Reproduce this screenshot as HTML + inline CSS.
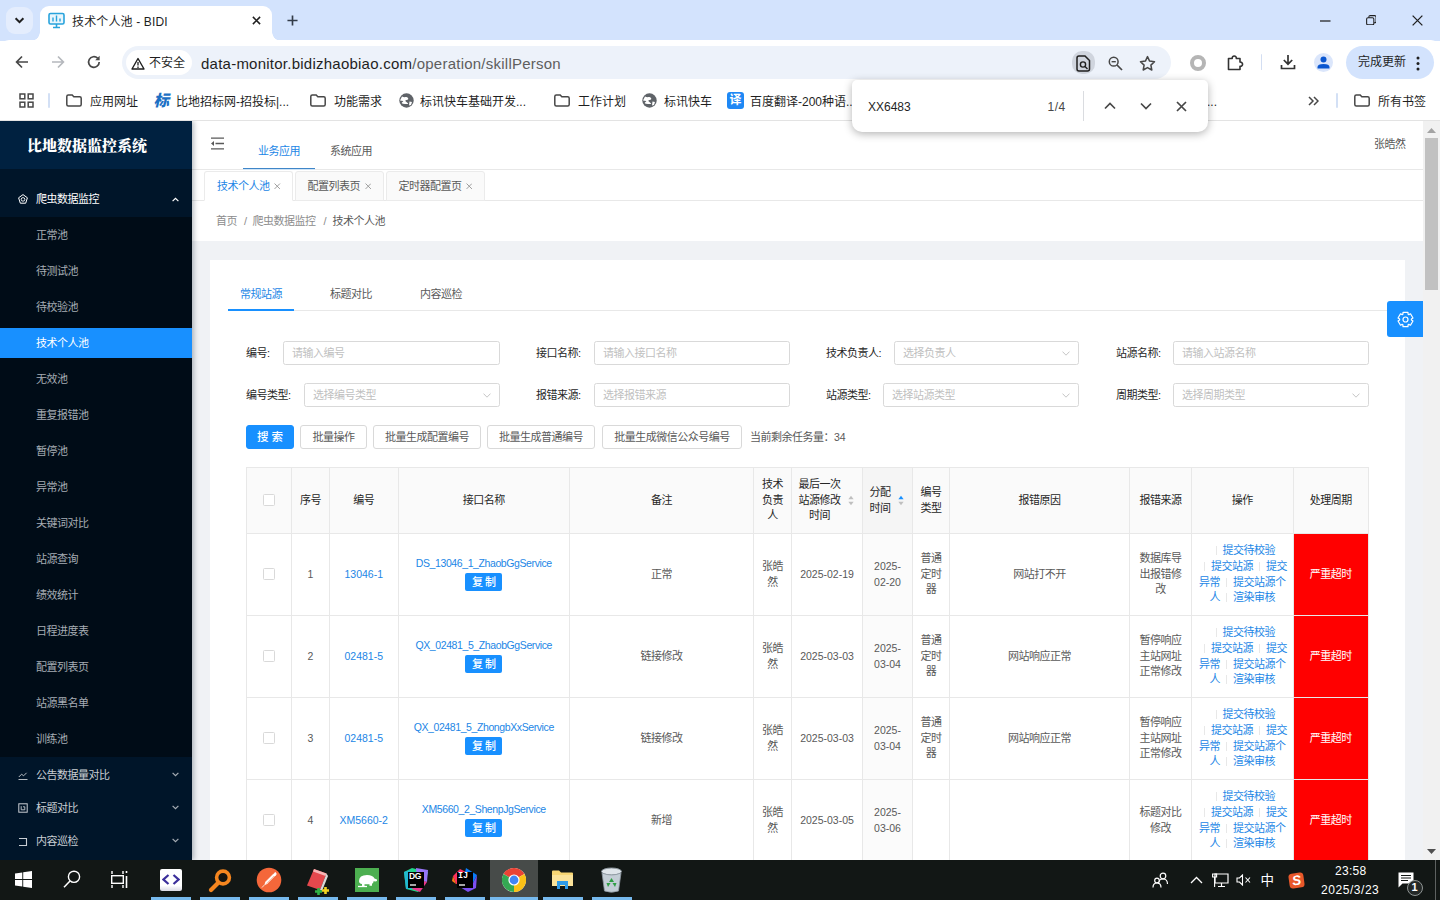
<!DOCTYPE html>
<html lang="zh-CN">
<head>
<meta charset="utf-8">
<title>技术个人池 - BIDI</title>
<style>
*{box-sizing:border-box;margin:0;padding:0}
html,body{width:1440px;height:900px;overflow:hidden;background:#fff}
body{font-family:"Liberation Sans","Noto Sans CJK SC",sans-serif;font-size:12px;color:#333;position:relative}
.abs{position:absolute}
svg{display:block}
/* ---------- browser chrome ---------- */
#tabstrip{position:absolute;left:0;top:0;width:1440px;height:41px;background:#d3e3fd}
#tabsearch{position:absolute;left:6px;top:7px;width:27px;height:27px;border-radius:9px;background:#e4edfd}
#tab{position:absolute;left:40px;top:6px;width:232px;height:35px;background:#fff;border-radius:9px 9px 0 0}
#tab:before,#tab:after{content:"";position:absolute;bottom:0;width:9px;height:9px;background:radial-gradient(circle at 0 0,rgba(255,255,255,0) 8.5px,#fff 9px)}
#tab:before{left:-9px}
#tab:after{right:-9px;background:radial-gradient(circle at 100% 0,rgba(255,255,255,0) 8.5px,#fff 9px)}
#tabtitle{position:absolute;left:32px;top:6.500px;letter-spacing:.15px;font-size:12px;color:#1f1f1f;white-space:nowrap;line-height:18px}
#toolbar{position:absolute;left:0;top:40px;width:1440px;height:43px;background:#fff;border-radius:9px 9px 0 0}
#omni{position:absolute;left:122px;top:6px;width:1049px;height:33px;border-radius:17px;background:#edf2fa}
#chip{position:absolute;left:4px;top:4px;width:66px;height:25px;border-radius:13px;background:#fff}
#chip span{position:absolute;left:23px;top:3.500px;font-size:12px;color:#1f1f1f;line-height:19px}
#url{position:absolute;left:79px;top:6.500px;font-size:15px;line-height:21px;color:#1f1f1f;white-space:nowrap;letter-spacing:.24px}
#url i{font-style:normal;color:#5e5e5e}
#update{position:absolute;left:1346px;top:6px;width:88px;height:33px;border-radius:17px;background:#d3e3fd}
#update span{position:absolute;left:12px;top:7px;font-size:12px;color:#1f1f1f;line-height:19px}
#bookmarks{position:absolute;left:0;top:83px;width:1440px;height:38px;background:#fff;border-bottom:1px solid #e3e3e3}
.bm{position:absolute;top:9.500px;font-size:12px;line-height:19px;color:#1f1f1f;white-space:nowrap}
/* ---------- find bar ---------- */
#find{position:absolute;left:852px;top:80px;width:356px;height:52px;background:#fff;border-radius:5px 5px 10px 10px;box-shadow:0 2px 9px rgba(0,0,0,.3)}
/* ---------- taskbar ---------- */
#taskbar{position:absolute;left:0;top:860px;width:1440px;height:40px;background:#121715}
/* ---------- page ---------- */
#page{position:absolute;left:0;top:121px;width:1440px;height:739px;background:#f0f2f5;overflow:hidden}
#side{position:absolute;left:0;top:0;width:192px;height:739px;background:#001529}
#logo{position:absolute;left:0;top:0;width:192px;height:48px;background:#002140;color:#fff;font-weight:bold;font-size:15px;line-height:50px;padding-left:27px;font-family:"Liberation Serif","Noto Serif CJK SC",serif;font-weight:900}

#menu0{position:absolute;left:0;top:63px;width:192px;height:30px;color:#fff;font-size:10.5px;line-height:30px}
.mi{position:absolute;left:0;width:192px;height:30px;line-height:30px;font-size:11px;letter-spacing:-.5px;color:#a6adb4;padding-left:36px;white-space:nowrap}
#sub{position:absolute;left:0;top:96px;width:192px;height:540px;background:#000c17}
.sel{background:#1890ff;color:#fff}
.chev{position:absolute;left:172px}

.ul{position:absolute;top:37px;height:3px;width:40px;background:#76b9ed}
.tray{position:absolute;color:#fff;font-size:12px;white-space:nowrap}

#side{box-shadow:2px 0 5px rgba(0,21,41,.28);z-index:5}
#main{position:absolute;left:192px;top:0;width:1231px;height:739px;font-size:11px;letter-spacing:-.5px;color:#595959}
.l{font-size:10.500px;letter-spacing:0}
#hdr{position:absolute;left:0;top:0;width:1231px;height:49px;background:#fff;border-bottom:1px solid #e8e8e8}
.nav{position:absolute;top:21px;font-size:11px;line-height:18px;color:#595959;white-space:nowrap}
#tabsbar{position:absolute;left:0;top:49px;width:1231px;height:31px;background:#fff;border-bottom:1px solid #e8e8e8}
.ptab{position:absolute;top:1px;height:30px;border:1px solid #ebebeb;border-radius:3px 3px 0 0;background:#fafafa;line-height:28px;font-size:11px;color:#595959;white-space:nowrap;padding-left:12px}
.ptab.on{background:#fff;border-bottom-color:#fff;color:#2286e6}
.ptab svg{position:absolute;top:11px}
#crumb{position:absolute;left:0;top:80px;width:1231px;height:40px;background:#fff;line-height:40px;white-space:nowrap}
#crumb span{position:absolute;top:0;color:#8c8c8c}
#card{position:absolute;left:18px;top:139px;width:1195px;height:620px;background:#fff}
.ctab{position:absolute;top:24.500px;font-size:11px;line-height:18px;color:#595959;white-space:nowrap}
.lbl{position:absolute;color:#262626;white-space:nowrap;line-height:24px;height:24px}
.inp{position:absolute;height:24px;border:1px solid #d9d9d9;border-radius:2.500px;background:#fff;color:#bfbfbf;line-height:22px;padding-left:8px;white-space:nowrap}
.inp svg{position:absolute;right:8px;top:9px}
.btn{position:absolute;top:165px;height:24px;border:1px solid #d9d9d9;border-radius:3px;background:#fff;color:#595959;line-height:22px;text-align:center;white-space:nowrap}

#tbl{position:absolute;left:36px;top:207px;width:1123px}
#tbl table{border-collapse:collapse;table-layout:fixed;width:1123px;font-size:11px;line-height:15.750px;color:#595959}
#tbl td,#tbl th{border:1px solid #e8e8e8;padding:0 6px;white-space:nowrap;text-align:center;vertical-align:middle;font-weight:normal;overflow:hidden}
#tbl th{height:66px;background:#fafafa;color:#262626}
#tbl td{height:82px}
#tbl a{color:#2286e6;text-decoration:none}
#tbl a.n{letter-spacing:-.4px;font-size:10.500px}
#tbl .cb{display:inline-block;width:12px;height:12px;border:1px solid #d9d9d9;border-radius:1.500px;background:#fff;vertical-align:middle;position:relative;top:-1px}
#tbl .cp{display:inline-block;width:37px;height:18px;line-height:18px;border-radius:2px;background:#1890ff;color:#fff;margin-top:2px;font-weight:500;position:relative;top:-1px}
#tbl a.n{position:relative;top:-1px}
#tbl .red{background:#ff0000;color:#fff}
#tbl .dv{display:inline-block;width:1px;height:9px;background:#e8e8e8;margin:0 6px;vertical-align:-1px}
#tbl .st{display:inline-block;vertical-align:middle;text-align:center;position:relative;left:-2px}
#tbl .so{display:inline-block;vertical-align:middle;margin-left:5px}
#sbar{position:absolute;left:1423px;top:0;width:17px;height:739px;background:#f1f1f1}
#sbar i{position:absolute;left:2px;top:17px;width:13px;height:152px;background:#c1c1c1}
</style>
</head>
<body>
<div id="tabstrip">
  <div id="tabsearch"><svg class="abs" style="left:8px;top:9px" width="11" height="9" viewBox="0 0 11 9"><path d="M1.6 2.2 5.5 6.1 9.4 2.2" fill="none" stroke="#1f1f1f" stroke-width="2"/></svg></div>
  <div id="tab">
    <svg class="abs" style="left:8px;top:6px" width="17" height="17" viewBox="0 0 17 17"><rect x="1" y="1.5" width="15" height="10.5" rx="1.5" fill="#e8f6fd" stroke="#29a3dc" stroke-width="1.6"/><path d="M5 9.500V5.500M8.500 9.500V3.500M12 9.500V6.500" stroke="#29a3dc" stroke-width="1.400"/><path d="M8.5 12v3M5 15.5h7" stroke="#29a3dc" stroke-width="1.6"/></svg>
    <div id="tabtitle">技术个人池 - BIDI</div>
    <svg class="abs" style="left:211.500px;top:9.500px" width="9" height="9" viewBox="0 0 10 10"><path d="M1 1 9 9M9 1 1 9" stroke="#1f1f1f" stroke-width="1.700"/></svg>
  </div>
  <svg class="abs" style="left:286.500px;top:14.500px" width="11" height="11" viewBox="0 0 12 12"><path d="M6 .5v11M.5 6h11" stroke="#333c49" stroke-width="1.800"/></svg>
  <svg class="abs" style="left:1320px;top:19.500px" width="10.500" height="2" viewBox="0 0 11 2"><path d="M0 1h11" stroke="#1f1f1f" stroke-width="1.3"/></svg>
  <svg class="abs" style="left:1365.500px;top:14.500px" width="10.800" height="10.800" viewBox="0 0 12 12"><rect x=".7" y="3" width="8" height="8" rx="1.5" fill="none" stroke="#1f1f1f" stroke-width="1.2"/><path d="M3.2 3V2.2q0-1.5 1.5-1.5h5q1.5 0 1.5 1.5v5q0 1.5-1.5 1.5H8.9" fill="none" stroke="#1f1f1f" stroke-width="1.2"/></svg>
  <svg class="abs" style="left:1411.500px;top:14.500px" width="11" height="11" viewBox="0 0 12 12"><path d="M.7.7l10.6 10.6M11.3.7.7 11.3" stroke="#1f1f1f" stroke-width="1.400"/></svg>
</div>
<div id="toolbar">
  <svg class="abs" style="left:15px;top:15px" width="14" height="14" viewBox="0 0 14 14"><path d="M13 7H2M7 1.5 1.6 7 7 12.5" fill="none" stroke="#474747" stroke-width="1.7"/></svg>
  <svg class="abs" style="left:51px;top:15px" width="14" height="14" viewBox="0 0 14 14"><path d="M1 7h11M7 1.5 12.4 7 7 12.5" fill="none" stroke="#b5b8bd" stroke-width="1.7"/></svg>
  <svg class="abs" style="left:87px;top:15px" width="14" height="14" viewBox="0 0 14 14"><path d="M12.2 7A5.3 5.3 0 1 1 10.6 3.2" fill="none" stroke="#474747" stroke-width="1.7"/><path d="M12.6.8v4.4H8.2z" fill="#474747"/></svg>
  <div id="omni">
    <div id="chip"><svg class="abs" style="left:5px;top:6.500px" width="14" height="13" viewBox="0 0 14 13"><path d="M7 1.5 13 12H1z" fill="none" stroke="#1f1f1f" stroke-width="1.4" stroke-linejoin="round"/><path d="M7 5v3.5M7 9.6v1.3" stroke="#1f1f1f" stroke-width="1.3"/></svg><span>不安全</span></div>
    <div id="url">data-monitor.bidizhaobiao.com<i>/operation/skillPerson</i></div>
    <div class="abs" style="left:950px;top:5px;width:23px;height:23px;border-radius:10px;background:#d0d5de"></div>
    <svg class="abs" style="left:954px;top:9px" width="15" height="17" viewBox="0 0 15 17"><path d="M3 1h6l4.5 4.5V14q0 2-2 2H3q-2 0-2-2V3q0-2 2-2z" fill="none" stroke="#1f1f1f" stroke-width="1.5"/><circle cx="7" cy="9.5" r="2.6" fill="none" stroke="#1f1f1f" stroke-width="1.4"/><path d="M9 11.5l2.5 2.5" stroke="#1f1f1f" stroke-width="1.4"/></svg>
    <svg class="abs" style="left:986px;top:10px" width="15" height="15" viewBox="0 0 15 15"><circle cx="5.7" cy="5.7" r="4.4" fill="none" stroke="#474747" stroke-width="1.5"/><path d="M9 9l5 5" stroke="#474747" stroke-width="1.7"/><path d="M3.6 5.7h4.2" stroke="#474747" stroke-width="1.4"/></svg>
    <svg class="abs" style="left:1017px;top:9px" width="17" height="16" viewBox="0 0 17 16"><path d="M8.5 1.6l2.1 4.5 4.9.6-3.6 3.4.9 4.9-4.3-2.4-4.3 2.4.9-4.9L1.500 6.700l4.900-.6z" fill="none" stroke="#474747" stroke-width="1.5" stroke-linejoin="round"/></svg>
  </div>
  <div class="abs" style="left:1189.500px;top:14.500px;width:16px;height:16px;border-radius:50%;border:4px solid #b5b5b5"></div>
  <svg class="abs" style="left:1226px;top:13px" width="18" height="18" viewBox="0 0 18 18"><path d="M2.500 5.500h3.700a2.100 2.100 0 1 1 4.100 0H14v3.600a2.100 2.100 0 1 1 0 4.100V16.500H2.500z" fill="none" stroke="#333" stroke-width="1.6" stroke-linejoin="round"/></svg>
  <div class="abs" style="left:1260.500px;top:14px;width:1.500px;height:16px;background:#d3def2;border-radius:1px"></div>
  <svg class="abs" style="left:1280px;top:14px" width="16" height="16" viewBox="0 0 16 16"><path d="M8 1v9M3.800 6 8 10.200 12.200 6" fill="none" stroke="#333" stroke-width="1.7"/><path d="M1.500 11v3.500h13V11" fill="none" stroke="#333" stroke-width="1.7"/></svg>
  <div class="abs" style="left:1314px;top:13px;width:19px;height:19px;border-radius:50%;background:#dbe6fb"></div>
  <svg class="abs" style="left:1317px;top:16px" width="13" height="13" viewBox="0 0 13 13"><circle cx="6.500" cy="3.500" r="3" fill="#0b57d0"/><path d="M.5 12.500v-1.500q0-3 6-3t6 3v1.500z" fill="#0b57d0"/></svg>
  <div id="update"><span>完成更新</span><svg class="abs" style="left:70px;top:10px" width="4" height="15" viewBox="0 0 4 15"><circle cx="2" cy="2" r="1.500" fill="#1f1f1f"/><circle cx="2" cy="7.500" r="1.500" fill="#1f1f1f"/><circle cx="2" cy="13" r="1.500" fill="#1f1f1f"/></svg></div>
</div>
<div id="bookmarks">
  <svg class="abs" style="left:19px;top:10px" width="15" height="15" viewBox="0 0 15 15"><g fill="none" stroke="#474747" stroke-width="1.500"><rect x="1" y="1" width="4.800" height="4.800"/><rect x="9.200" y="1" width="4.800" height="4.800"/><rect x="1" y="9.200" width="4.800" height="4.800"/><rect x="9.200" y="9.200" width="4.800" height="4.800"/></g></svg>
  <div class="abs" style="left:48px;top:10px;width:2px;height:15px;background:#d3e0f5;border-radius:1px"></div>
  <svg class="abs" style="left:66px;top:11px" width="16" height="13" viewBox="0 0 16 13"><path d="M2.300 1h3.900l1.600 1.700h5.900q1.500 0 1.500 1.500v6.300q0 1.500-1.500 1.500H2.300Q.8 12 .8 10.500v-8Q.8 1 2.300 1z" fill="none" stroke="#474747" stroke-width="1.500"/></svg><div class="bm" style="left:90px">应用网址</div>
  <div class="abs" style="left:153.500px;top:7.500px;width:18px;font-size:15.500px;line-height:20px;font-weight:900;font-style:italic;color:#1c70c4;font-family:'Liberation Sans','Noto Sans CJK SC',sans-serif">标</div>
  <div class="bm" style="left:176px">比地招标网-招投标|...</div>
  <svg class="abs" style="left:310px;top:11px" width="16" height="13" viewBox="0 0 16 13"><path d="M2.300 1h3.900l1.600 1.700h5.900q1.500 0 1.500 1.500v6.300q0 1.500-1.500 1.500H2.300Q.8 12 .8 10.500v-8Q.8 1 2.300 1z" fill="none" stroke="#474747" stroke-width="1.500"/></svg><div class="bm" style="left:334px">功能需求</div>
  <svg class="abs" style="left:399px;top:10px" width="15" height="15" viewBox="0 0 15 15"><circle cx="7.500" cy="7.500" r="7.200" fill="#5f6368"/><path d="M3 3.500q2 1 3.500.5t2.500 1-1.500 2 .5 2.500-2 1.500T3.500 9 1 7.500zM10.500 8.500l2.500.5-1 3-2 .5z" fill="#fff"/></svg><div class="bm" style="left:420px">标讯快车基础开发...</div>
  <svg class="abs" style="left:554px;top:11px" width="16" height="13" viewBox="0 0 16 13"><path d="M2.300 1h3.900l1.600 1.700h5.900q1.500 0 1.500 1.500v6.300q0 1.500-1.500 1.500H2.300Q.8 12 .8 10.500v-8Q.8 1 2.300 1z" fill="none" stroke="#474747" stroke-width="1.500"/></svg><div class="bm" style="left:578px">工作计划</div>
  <svg class="abs" style="left:642px;top:10px" width="15" height="15" viewBox="0 0 15 15"><circle cx="7.500" cy="7.500" r="7.200" fill="#5f6368"/><path d="M3 3.500q2 1 3.500.5t2.500 1-1.500 2 .5 2.500-2 1.500T3.500 9 1 7.500zM10.500 8.500l2.500.5-1 3-2 .5z" fill="#fff"/></svg><div class="bm" style="left:664px">标讯快车</div>
  <div class="abs" style="left:727px;top:9px;width:17px;height:17px;border-radius:3px;background:#1e88f5;color:#fff;font-size:12px;line-height:17px;text-align:center;font-weight:bold">译</div>
  <div class="bm" style="left:750px">百度翻译-200种语...</div>
  <div class="bm" style="left:1207px">...</div>
  <svg class="abs" style="left:1308px;top:13px" width="11" height="10" viewBox="0 0 11 10"><path d="M1 1l4 4-4 4M6 1l4 4-4 4" fill="none" stroke="#474747" stroke-width="1.500"/></svg>
  <div class="abs" style="left:1336px;top:10px;width:2px;height:15px;background:#d3e0f5;border-radius:1px"></div>
  <svg class="abs" style="left:1354px;top:11px" width="16" height="13" viewBox="0 0 16 13"><path d="M2.300 1h3.900l1.600 1.700h5.900q1.500 0 1.500 1.500v6.300q0 1.500-1.500 1.500H2.300Q.8 12 .8 10.500v-8Q.8 1 2.300 1z" fill="none" stroke="#474747" stroke-width="1.500"/></svg><div class="bm" style="left:1378px">所有书签</div>
</div>
<div id="page">
  <div id="side">
    <div id="logo">比地数据监控系统</div>
    <div id="sub"></div>
    <div class="mi" style="top:63px;color:#fff">爬虫数据监控</div>
    <svg class="abs" style="left:18px;top:73px" width="10" height="10" viewBox="0 0 10 10"><path d="M5 .6 9.400 3.800 7.700 9.200H2.300L.6 3.800z" fill="none" stroke="#fff" stroke-width="1"/><circle cx="5" cy="5.400" r="1.800" fill="none" stroke="#fff" stroke-width=".9"/></svg>
    <svg class="chev" style="top:76px" width="7" height="5" viewBox="0 0 7 5"><path d="M.6 4.200 3.500 1.300 6.400 4.200" fill="none" stroke="#fff" stroke-width="1.200"/></svg>
<div class="mi" style="top:99px">正常池</div>
<div class="mi" style="top:135px">待测试池</div>
<div class="mi" style="top:171px">待校验池</div>
<div class="mi sel" style="top:207px">技术个人池</div>
<div class="mi" style="top:243px">无效池</div>
<div class="mi" style="top:279px">重复报错池</div>
<div class="mi" style="top:315px">暂停池</div>
<div class="mi" style="top:351px">异常池</div>
<div class="mi" style="top:387px">关键词对比</div>
<div class="mi" style="top:423px">站源查询</div>
<div class="mi" style="top:459px">绩效统计</div>
<div class="mi" style="top:495px">日程进度表</div>
<div class="mi" style="top:531px">配置列表页</div>
<div class="mi" style="top:567px">站源黑名单</div>
<div class="mi" style="top:603px">训练池</div>

    <div class="mi" style="top:639px;color:#c9ced3">公告数据量对比</div>
    <svg class="abs" style="left:18px;top:649.500px" width="10" height="10" viewBox="0 0 10 10"><path d="M.8 6 3.600 3.200 5.600 4.800 8.600 1.800" fill="none" stroke="#c9ced3" stroke-width=".9"/><path d="M.5 8.500h9" stroke="#c9ced3" stroke-width=".9"/></svg>
    <svg class="chev" style="top:651px" width="7" height="5" viewBox="0 0 7 5"><path d="M.6.8 3.500 3.700 6.400.8" fill="none" stroke="#a6adb4" stroke-width="1.200"/></svg>
    <div class="mi" style="top:672px;color:#c9ced3">标题对比</div>
    <svg class="abs" style="left:18px;top:682px" width="10" height="10" viewBox="0 0 10 10"><rect x=".8" y=".8" width="8.400" height="8.400" fill="none" stroke="#c9ced3" stroke-width="1"/><path d="M3.200 3.200v3.600h3.600V3.800H5" fill="none" stroke="#c9ced3" stroke-width=".9"/></svg>
    <svg class="chev" style="top:684px" width="7" height="5" viewBox="0 0 7 5"><path d="M.6.8 3.500 3.700 6.400.8" fill="none" stroke="#a6adb4" stroke-width="1.200"/></svg>
    <div class="mi" style="top:705px;color:#c9ced3">内容巡检</div>
    <svg class="abs" style="left:18px;top:715.500px" width="10" height="10" viewBox="0 0 10 10"><path d="M1 1.500h7.500v7H1" fill="none" stroke="#c9ced3" stroke-width="1.100"/></svg>
    <svg class="chev" style="top:717px" width="7" height="5" viewBox="0 0 7 5"><path d="M.6.8 3.500 3.700 6.400.8" fill="none" stroke="#a6adb4" stroke-width="1.200"/></svg>
  </div>
  <div id="main">
    <div id="hdr">
      <svg class="abs" style="left:19px;top:16px" width="13" height="13" viewBox="0 0 13 13"><path d="M0 1.200h13M4.500 6.500H13M0 11.800h13" stroke="#595959" stroke-width="1.300"/><path d="M3 4v5L0 6.500z" fill="#595959"/></svg>
      <div class="nav" style="left:66px;color:#2286e6">业务应用</div>
      <div class="nav" style="left:138px">系统应用</div>
      <div class="abs" style="left:51px;top:47px;width:72px;height:1px;background:#3f86c8"></div><div class="abs" style="left:51px;top:48px;width:72px;height:1px;background:#cfe4f7;z-index:2"></div>
      <div class="nav" style="left:1182px;top:14px">张皓然</div>
    </div>
    <div id="tabsbar">
      <div class="ptab on" style="left:12px;width:89px">技术个人池<svg style="left:69px" width="6.500" height="6.500" viewBox="0 0 7 7"><path d="M.6.6l5.800 5.800M6.400.6.600 6.400" stroke="#8c8c8c" stroke-width=".9"/></svg></div>
      <div class="ptab" style="left:102.500px;width:89px">配置列表页<svg style="left:69px" width="6.500" height="6.500" viewBox="0 0 7 7"><path d="M.6.6l5.800 5.800M6.400.6.600 6.400" stroke="#8c8c8c" stroke-width=".9"/></svg></div>
      <div class="ptab" style="left:193.500px;width:99px">定时器配置页<svg style="left:79px" width="6.500" height="6.500" viewBox="0 0 7 7"><path d="M.6.6l5.800 5.800M6.400.6.600 6.400" stroke="#8c8c8c" stroke-width=".9"/></svg></div>
    </div>
    <div id="crumb"><span style="left:24px">首页</span><span style="left:52px">/</span><span style="left:60.500px">爬虫数据监控</span><span style="left:131.500px">/</span><span style="left:140.500px;color:#595959">技术个人池</span></div>
    <div id="card">
      <div class="ctab" style="left:30px;color:#2286e6">常规站源</div>
      <div class="ctab" style="left:120px">标题对比</div>
      <div class="ctab" style="left:210px">内容巡检</div>
      <div class="abs" style="left:18px;top:50px;width:1159px;height:1px;background:#e8e8e8"></div>
      <div class="abs" style="left:18px;top:49px;width:66px;height:2px;background:#1890ff"></div>

      <div class="lbl" style="left:36px;top:81px">编号:</div>
      <div class="inp" style="left:73px;top:81px;width:217px">请输入编号</div>
      <div class="lbl" style="left:326px;top:81px">接口名称:</div>
      <div class="inp" style="left:384px;top:81px;width:196px">请输入接口名称</div>
      <div class="lbl" style="left:616px;top:81px">技术负责人:</div>
      <div class="inp" style="left:684px;top:81px;width:185px">选择负责人<svg width="8" height="5" viewBox="0 0 8 5"><path d="M.5.600 4 4.200 7.500.600" fill="none" stroke="#bfbfbf" stroke-width=".9"/></svg></div>
      <div class="lbl" style="left:906px;top:81px">站源名称:</div>
      <div class="inp" style="left:963px;top:81px;width:196px">请输入站源名称</div>

      <div class="lbl" style="left:36px;top:123px">编号类型:</div>
      <div class="inp" style="left:94px;top:123px;width:196px">选择编号类型<svg width="8" height="5" viewBox="0 0 8 5"><path d="M.5.600 4 4.200 7.500.600" fill="none" stroke="#bfbfbf" stroke-width=".9"/></svg></div>
      <div class="lbl" style="left:326px;top:123px">报错来源:</div>
      <div class="inp" style="left:384px;top:123px;width:196px">选择报错来源</div>
      <div class="lbl" style="left:616px;top:123px">站源类型:</div>
      <div class="inp" style="left:673px;top:123px;width:196px">选择站源类型<svg width="8" height="5" viewBox="0 0 8 5"><path d="M.5.600 4 4.200 7.500.600" fill="none" stroke="#bfbfbf" stroke-width=".9"/></svg></div>
      <div class="lbl" style="left:906px;top:123px">周期类型:</div>
      <div class="inp" style="left:963px;top:123px;width:196px">选择周期类型<svg width="8" height="5" viewBox="0 0 8 5"><path d="M.5.600 4 4.200 7.500.600" fill="none" stroke="#bfbfbf" stroke-width=".9"/></svg></div>

      <div class="btn" style="left:36px;width:48px;background:#1890ff;border-color:#1890ff;color:#fff;font-weight:500;font-size:11.500px;letter-spacing:0">搜 索</div>
      <div class="btn" style="left:90px;width:67px">批量操作</div>
      <div class="btn" style="left:163px;width:108px">批量生成配置编号</div>
      <div class="btn" style="left:277px;width:108px">批量生成普通编号</div>
      <div class="btn" style="left:392px;width:140px">批量生成微信公众号编号</div>
      <div class="lbl" style="left:540px;top:165px;color:#595959">当前剩余任务量：<span class="l">34</span></div>
      <div id="tbl"><table><colgroup><col style="width:45px"><col style="width:38px"><col style="width:68.5px"><col style="width:171.5px"><col style="width:184px"><col style="width:38px"><col style="width:71px"><col style="width:50px"><col style="width:37px"><col style="width:180px"><col style="width:62px"><col style="width:101.5px"><col style="width:75.5px"></colgroup><tr><th><span class="cb"></span></th><th>序号</th><th>编号</th><th>接口名称</th><th>备注</th><th>技术<br>负责<br>人</th><th><span class="st">最后一次<br>站源修改<br>时间</span><svg class="so" width="6" height="11" viewBox="0 0 6 11"><path d="M3 .8 5.600 4.300H.4z" fill="#bfbfbf"/><path d="M3 10.200.4 6.700h5.200z" fill="#bfbfbf"/></svg></th><th style="background:#f5f5f5"><span class="st">分配<br>时间</span><svg class="so" width="6" height="11" viewBox="0 0 6 11"><path d="M3 .8 5.600 4.300H.4z" fill="#1890ff"/><path d="M3 10.200.4 6.700h5.200z" fill="#bfbfbf"/></svg></th><th>编号<br>类型</th><th>报错原因</th><th>报错来源</th><th>操作</th><th>处理周期</th></tr><tr><td><span class="cb"></span></td><td class="l">1</td><td class="l"><a>13046-1</a></td><td><a class="n">DS_13046_1_ZhaobGgService</a><br><span class="cp">复 制</span></td><td>正常</td><td>张皓<br>然</td><td class="l">2025-02-19</td><td class="l" style="background:#fbfbfb">2025-<br>02-20</td><td>普通<br>定时<br>器</td><td>网站打不开</td><td>数据库导<br>出报错修<br>改</td><td><span class="dv"></span><a>提交待校验</a><br><span class="dv"></span><a>提交站源</a><span class="dv"></span><a>提交</a><br><a>异常</a><span class="dv"></span><a>提交站源个</a><br><a>人</a><span class="dv"></span><a>渲染审核</a></td><td class="red">严重超时</td></tr><tr><td><span class="cb"></span></td><td class="l">2</td><td class="l"><a>02481-5</a></td><td><a class="n">QX_02481_5_ZhaobGgService</a><br><span class="cp">复 制</span></td><td>链接修改</td><td>张皓<br>然</td><td class="l">2025-03-03</td><td class="l" style="background:#fbfbfb">2025-<br>03-04</td><td>普通<br>定时<br>器</td><td>网站响应正常</td><td>暂停响应<br>主站网址<br>正常修改</td><td><span class="dv"></span><a>提交待校验</a><br><span class="dv"></span><a>提交站源</a><span class="dv"></span><a>提交</a><br><a>异常</a><span class="dv"></span><a>提交站源个</a><br><a>人</a><span class="dv"></span><a>渲染审核</a></td><td class="red">严重超时</td></tr><tr><td><span class="cb"></span></td><td class="l">3</td><td class="l"><a>02481-5</a></td><td><a class="n">QX_02481_5_ZhongbXxService</a><br><span class="cp">复 制</span></td><td>链接修改</td><td>张皓<br>然</td><td class="l">2025-03-03</td><td class="l" style="background:#fbfbfb">2025-<br>03-04</td><td>普通<br>定时<br>器</td><td>网站响应正常</td><td>暂停响应<br>主站网址<br>正常修改</td><td><span class="dv"></span><a>提交待校验</a><br><span class="dv"></span><a>提交站源</a><span class="dv"></span><a>提交</a><br><a>异常</a><span class="dv"></span><a>提交站源个</a><br><a>人</a><span class="dv"></span><a>渲染审核</a></td><td class="red">严重超时</td></tr><tr><td><span class="cb"></span></td><td class="l">4</td><td class="l"><a>XM5660-2</a></td><td><a class="n">XM5660_2_ShenpJgService</a><br><span class="cp">复 制</span></td><td>新增</td><td>张皓<br>然</td><td class="l">2025-03-05</td><td class="l" style="background:#fbfbfb">2025-<br>03-06</td><td></td><td></td><td>标题对比<br>修改</td><td><span class="dv"></span><a>提交待校验</a><br><span class="dv"></span><a>提交站源</a><span class="dv"></span><a>提交</a><br><a>异常</a><span class="dv"></span><a>提交站源个</a><br><a>人</a><span class="dv"></span><a>渲染审核</a></td><td class="red">严重超时</td></tr></table></div>
    </div>
    <div class="abs" style="left:1195px;top:180px;width:36px;height:36px;background:#1890ff;border-radius:3px 0 0 3px"></div>
    <svg class="abs" style="left:1204.500px;top:189.500px" width="17" height="17" viewBox="0 0 17 17"><path d="M6.03 1.31 L10.97 1.31 L11.09 3.20 L11.80 3.61 L13.49 2.76 L15.96 7.05 L14.39 8.09 L14.39 8.91 L15.96 9.95 L13.49 14.24 L11.80 13.39 L11.09 13.80 L10.97 15.69 L6.03 15.69 L5.91 13.80 L5.20 13.39 L3.51 14.24 L1.04 9.95 L2.61 8.91 L2.61 8.09 L1.04 7.05 L3.51 2.76 L5.20 3.61 L5.91 3.20z" fill="none" stroke="#fff" stroke-width="1.200" stroke-linejoin="round"/><circle cx="8.500" cy="8.500" r="2.500" fill="none" stroke="#fff" stroke-width="1.200"/></svg>
  </div>
  <div id="sbar"><i></i><svg class="abs" style="left:4px;top:7px" width="9" height="5" viewBox="0 0 9 5"><path d="M4.500 0 9 5H0z" fill="#a3a3a3"/></svg><svg class="abs" style="left:4px;top:728px" width="9" height="5" viewBox="0 0 9 5"><path d="M4.500 5 9 0H0z" fill="#505050"/></svg></div>
</div>
<div id="find">
  <div class="abs" style="left:16px;top:18.500px;font-size:12px;line-height:16px;color:#1f1f1f">XX6483</div>
  <div class="abs" style="left:195.500px;top:18.500px;font-size:12px;line-height:16px;color:#474747;letter-spacing:.5px">1/4</div>
  <div class="abs" style="left:231px;top:11px;width:1px;height:30px;background:#dadce0"></div>
  <svg class="abs" style="left:252px;top:22px" width="12" height="8" viewBox="0 0 12 8"><path d="M1 6.500 6 1.500 11 6.500" fill="none" stroke="#474747" stroke-width="1.700"/></svg>
  <svg class="abs" style="left:288px;top:22px" width="12" height="8" viewBox="0 0 12 8"><path d="M1 1.500 6 6.500 11 1.500" fill="none" stroke="#474747" stroke-width="1.700"/></svg>
  <svg class="abs" style="left:324px;top:21px" width="11" height="11" viewBox="0 0 11 11"><path d="M1 1l9 9M10 1 1 10" stroke="#474747" stroke-width="1.700"/></svg>
</div>
<div id="taskbar">
  <div class="abs" style="left:490px;top:0;width:48px;height:40px;background:#474b49"></div>
  <div class="ul" style="left:151px"></div><div class="ul" style="left:200px"></div><div class="ul" style="left:249px"></div><div class="ul" style="left:298px"></div><div class="ul" style="left:347px"></div><div class="ul" style="left:396px"></div><div class="ul" style="left:445px"></div><div class="ul" style="left:543px"></div><div class="ul" style="left:592px"></div><div class="ul" style="left:490px;width:48px"></div>
  <svg class="abs" style="left:15px;top:11px" width="17" height="17" viewBox="0 0 17 17"><path d="M0 2.400 7.300 1.400V8H0zM8.200 1.300 17 0V8H8.200zM0 8.900H7.300V15.500L0 14.500zM8.200 8.900H17V17L8.200 15.700z" fill="#fff"/></svg>
  <svg class="abs" style="left:63px;top:10px" width="18" height="18" viewBox="0 0 18 18"><circle cx="11" cy="6.800" r="5.600" fill="none" stroke="#fff" stroke-width="1.400"/><path d="M7 11 1 17.300" stroke="#fff" stroke-width="1.500"/></svg>
  <svg class="abs" style="left:111px;top:11px" width="18" height="17" viewBox="0 0 18 17"><path d="M1 0v3M12 0v3M1 14v3M12 14v3" stroke="#fff" stroke-width="1.400"/><rect x=".7" y="4.700" width="11.600" height="7.600" fill="none" stroke="#fff" stroke-width="1.400"/><path d="M15.500 0v2M15.500 5v12" stroke="#fff" stroke-width="1.600"/></svg>
  <!-- app icons -->
  <div class="abs" style="left:160px;top:9px;width:22px;height:22px;border-radius:2px;background:linear-gradient(#fff,#fff 75%,#d9d9e4)"></div>
  <svg class="abs" style="left:162px;top:14px" width="18" height="11" viewBox="0 0 18 11"><path d="M6.500 1 1.500 5.500 6.500 10M11.500 1 16.500 5.500 11.500 10" fill="none" stroke="#3b2f9b" stroke-width="2.200"/></svg>
  <svg class="abs" style="left:207px;top:7px" width="26" height="28" viewBox="0 0 26 28"><circle cx="16" cy="10.500" r="6.400" fill="#15140f" stroke="#f5861f" stroke-width="3.600"/><path d="M10.500 16.500 4 23" stroke="#f5861f" stroke-width="4.200" stroke-linecap="round"/></svg>
  <svg class="abs" style="left:256px;top:7px" width="26" height="26" viewBox="0 0 26 26"><circle cx="13" cy="13" r="12.300" fill="#f4673a"/><path d="M19.500 5.500q1.500 1.500 0 3l-8 8-2.500.8.800-2.500 8-8q1-1 1.700-1.300zM9 17.300 6 20.500" fill="#fff" stroke="#fff" stroke-width=".8"/><path d="M11 16.500 18.500 9" stroke="#f4673a" stroke-width=".8"/></svg>
  <svg class="abs" style="left:305px;top:6px" width="26" height="30" viewBox="0 0 26 30"><path d="M9 3 21.500 7.500 15 24 2 19.500z" fill="#e5484d"/><path d="M9 3 21.500 7.500 20.500 10 8 5.500z" fill="#f7b5b5"/><path d="M21.500 7.500 23 10 17 25 15 24z" fill="#d9d9d9"/><path d="M13.500 22v7M10 25.500h7" stroke="#2fb344" stroke-width="2.600"/><path d="M20.500 21v7M17 24.500h7" stroke="#f3d321" stroke-width="2.600"/></svg>
  <div class="abs" style="left:355px;top:8px;width:24px;height:24px;background:#4caf50"></div>
  <svg class="abs" style="left:357px;top:13px" width="21" height="16" viewBox="0 0 21 16"><path d="M2 8q0-6 8-6 6 0 7.500 3.500l2.500 1q.5 1.500-1 2l-2.500-.3q0 2-1.500 2.500v2h-2.500v-1.500h-5V13H5v-2q-3-.5-3-3z" fill="#fff"/><path d="M1 13.500h9" stroke="#fff" stroke-width="1.300"/></svg>
  <svg class="abs" style="left:403px;top:7px" width="26" height="26" viewBox="0 0 26 26"><path d="M1 5 9 1 25 5 22 17 15 25 3 22z" fill="#21d789"/><path d="M13 1 25 3 24 15 14 12z" fill="#9775f8"/><path d="M14 12 24 15 17 25 9 22z" fill="#ed358c"/><path d="M1 5 7 3 9 22 3 22z" fill="#22b8cf"/><rect x="5" y="5" width="16" height="16" fill="#000"/><path d="M7 18h6" stroke="#fff" stroke-width="1.300"/></svg>
  <div class="abs" style="left:409px;top:12px;font:bold 8.500px/9px 'Liberation Sans',sans-serif;color:#fff;letter-spacing:-.3px">DG</div>
  <svg class="abs" style="left:452px;top:7px" width="26" height="26" viewBox="0 0 26 26"><path d="M1 9 8 2 16 6 10 16 4 17z" fill="#fe315d"/><path d="M4 17 1 9 0 14z" fill="#f97a12"/><path d="M14 1 25 8 21 16 12 10z" fill="#087cfa"/><path d="M21 16 25 8 24 21 16 25 8 20z" fill="#7b4ff0"/><rect x="5" y="5" width="16" height="16" fill="#000"/><path d="M7 18h6" stroke="#fff" stroke-width="1.300"/></svg>
  <div class="abs" style="left:458px;top:12px;font:bold 8.500px/9px 'Liberation Mono',monospace;color:#fff;letter-spacing:0">IJ</div>
  <svg class="abs" style="left:502px;top:8px" width="24" height="24" viewBox="0 0 24 24"><circle cx="12" cy="12" r="12" fill="#fff"/><path d="M12 12 1.600 6A12 12 0 0 1 22.400 6z" fill="#ea4335"/><path d="M12 12 22.400 6A12 12 0 0 1 12 24z" fill="#fbc116"/><path d="M12 12 12 24A12 12 0 0 1 1.600 6z" fill="#34a853"/><path d="M12 6.500H22.600" stroke="#ea4335" stroke-width="0"/><circle cx="12" cy="12" r="5.600" fill="#fff"/><circle cx="12" cy="12" r="4.400" fill="#4285f4"/></svg>
  <svg class="abs" style="left:551px;top:9px" width="24" height="22" viewBox="0 0 24 22"><path d="M1 2.500q0-1 1-1h6l2 2h11q1 0 1 1V17H1z" fill="#f7d674"/><path d="M1 6h21v11H1z" fill="#fbe39a"/><path d="M6 12h11v8h-3v-4h-5v4H6z" fill="#2f9be8"/></svg>
  <svg class="abs" style="left:600px;top:7px" width="23" height="26" viewBox="0 0 23 26"><ellipse cx="11.500" cy="4.500" rx="10" ry="3.500" fill="#dfe5ea" stroke="#8d979f" stroke-width="1"/><path d="M2 6 4.500 24q7 2.500 14 0L21 6q-9.500 4-19 0z" fill="#c3cdd5" stroke="#8d979f" stroke-width=".8"/><path d="M11.500 11l2.500 4h-5zM8 20l-1.500-4 4 0zM15 20l1.500-4-4 0z" fill="#2f9e44"/></svg>
  <!-- tray -->
  <svg class="abs" style="left:1152px;top:12px" width="17" height="16" viewBox="0 0 17 16"><circle cx="11" cy="4" r="2.800" fill="none" stroke="#fff" stroke-width="1.200"/><path d="M6.500 12q0-5 4.500-5t4.500 5" fill="none" stroke="#fff" stroke-width="1.200"/><circle cx="5" cy="8.500" r="2.300" fill="#121715" stroke="#fff" stroke-width="1.200"/><path d="M1 15.500q0-4.500 4-4.500t4 4.500" fill="none" stroke="#fff" stroke-width="1.200"/></svg>
  <svg class="abs" style="left:1190px;top:16px" width="13" height="8" viewBox="0 0 13 8"><path d="M1 7 6.500 1.500 12 7" fill="none" stroke="#fff" stroke-width="1.300"/></svg>
  <svg class="abs" style="left:1212px;top:13px" width="17" height="15" viewBox="0 0 17 15"><path d="M3 1h13v9H3z" fill="none" stroke="#fff" stroke-width="1.200"/><path d="M9.500 10v3.500M6 13.500h7" stroke="#fff" stroke-width="1.200"/><path d="M.6 1h4v3h-4zM2.600 4v10" fill="none" stroke="#fff" stroke-width="1.100"/></svg>
  <svg class="abs" style="left:1236px;top:14px" width="15" height="12" viewBox="0 0 15 12"><path d="M1 4h2.500L6.500 1v10L3.500 8H1z" fill="none" stroke="#fff" stroke-width="1.100"/><path d="M9.500 3.500l4.500 5M14 3.500l-4.500 5" stroke="#fff" stroke-width="1.100"/></svg>
  <div class="tray" style="left:1260.500px;top:11.500px;font-size:13.500px;line-height:18px">中</div>
  <div class="abs" style="left:1288.500px;top:12.500px;width:15px;height:15px;border-radius:3.500px;background:#e8582a;transform:rotate(-8deg);color:#fff;font:italic bold 13.500px/15px 'Liberation Sans',sans-serif;text-align:center">S</div>
  <div class="tray" style="left:1335px;top:3px;line-height:16px;letter-spacing:.3px">23:58</div>
  <div class="tray" style="left:1321px;top:22px;line-height:16px;letter-spacing:.55px">2025/3/23</div>
  <svg class="abs" style="left:1398px;top:12px" width="16" height="16" viewBox="0 0 16 16"><path d="M.5.500h15v11h-11l-4 4z" fill="#fff"/><path d="M3 3.500h10M3 6h10M3 8.500h7" stroke="#121715" stroke-width="1"/></svg>
  <div class="abs" style="left:1406.500px;top:19.500px;width:16px;height:16px;border-radius:50%;background:#232827;border:1.500px solid #8f9594;color:#fff;font:bold 11px/13px 'Liberation Sans',sans-serif;text-align:center">1</div>
  <div class="abs" style="left:1435px;top:0;width:1px;height:40px;background:#5d6160"></div>
</div>
</body>
</html>
